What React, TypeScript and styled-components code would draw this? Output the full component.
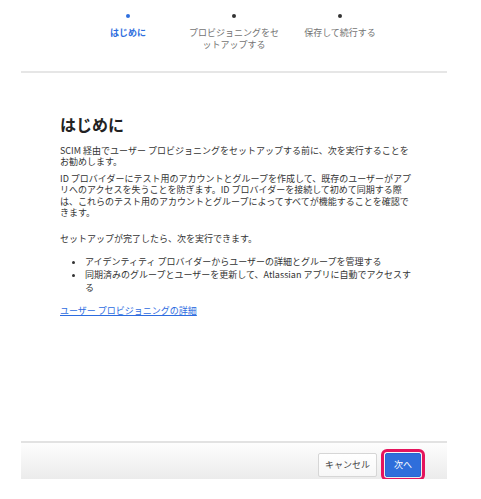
import React from "react";
import styled, { createGlobalStyle } from "styled-components";

const Global = createGlobalStyle`
  html, body { margin: 0; padding: 0; background: #ffffff; }
  body { font-family: "Noto Sans CJK JP", "Noto Sans", sans-serif; color: #333333; }
  * { box-sizing: border-box; }
`;

const Shell = styled.div`
  margin-left: 21px;
  width: 426px;
  height: 479px;
  display: flex;
  flex-direction: column;
`;

const Stepper = styled.ol`
  list-style: none;
  margin: 0;
  padding: 14px 0 0;
  height: 71px;
  display: grid;
  grid-template-columns: repeat(3, 106px);
  justify-content: center;
`;

const Step = styled.li<{ $active?: boolean }>`
  display: flex;
  flex-direction: column;
  align-items: center;
  padding: 0 7px;
  font-size: 9px;
  line-height: 12px;
  text-align: center;
  color: ${(p) => (p.$active ? "#2f6fde" : "#737373")};
  font-weight: ${(p) => (p.$active ? 700 : 400)};
`;

const Dot = styled.span<{ $active?: boolean }>`
  width: 4px;
  height: 4px;
  border-radius: 50%;
  background: ${(p) => (p.$active ? "#2f6fde" : "#333333")};
  margin-bottom: 9px;
`;

const Divider = styled.hr`
  margin: 0;
  border: 0;
  height: 2px;
  background: #e6e6e6;
`;

const Content = styled.section`
  padding: 41px 31px 0 39px;
`;

const Title = styled.h1`
  margin: 0 0 11px;
  font-size: 16px;
  line-height: 20px;
  font-weight: 700;
  color: #222222;
`;

const Para = styled.p<{ $gap?: number }>`
  margin: 0 0 ${(p) => p.$gap ?? 0}px;
  font-size: 9px;
  line-height: 11.4px;
  color: #333333;
`;

const List = styled.ul`
  margin: 10px 0 0;
  padding: 0 1px 0 25px;
  font-size: 9px;
  line-height: 13.3px;
  color: #333333;
`;

const Item = styled.li`
  padding-left: 0;
`;

const Link = styled.a`
  display: inline-block;
  margin-top: 9px;
  font-size: 9px;
  line-height: 11.4px;
  color: #2d6cdf;
  text-decoration: underline;
`;

const Footer = styled.footer`
  margin-top: auto;
  height: 38px;
  border-top: 2px solid #e2e2e2;
  background: linear-gradient(#fdfdfd, #ebebeb);
  display: flex;
  justify-content: flex-end;
  align-items: flex-start;
  gap: 8px;
  padding: 10px 26px 0 0;
`;

const Button = styled.button<{ $primary?: boolean }>`
  height: 24px;
  padding: 0 ${(p) => (p.$primary ? 8 : 6)}px;
  font-family: inherit;
  font-size: 9px;
  line-height: 22px;
  border-radius: 2px;
  cursor: pointer;
  border: 1px solid ${(p) => (p.$primary ? "#2a66d0" : "#d6d6d6")};
  background: ${(p) => (p.$primary ? "#2f6edb" : "linear-gradient(#ffffff, #f7f7f7)")};
  color: ${(p) => (p.$primary ? "#ffffff" : "#444444")};
  outline: ${(p) => (p.$primary ? "3px solid #e5145c" : "none")};
  outline-offset: 1px;
`;

const steps = [
  { label: "はじめに", active: true },
  { label: "プロビジョニングをセットアップする" },
  { label: "保存して続行する" },
];

export default function App() {
  return (
    <>
      <Global />
      <Shell>
        <Stepper>
          {steps.map((s) => (
            <Step key={s.label} $active={s.active}>
              <Dot $active={s.active} />
              <span>{s.label}</span>
            </Step>
          ))}
        </Stepper>
        <Divider />
        <Content>
          <Title>はじめに</Title>
          <Para $gap={5}>
            SCIM 経由でユーザー プロビジョニングをセットアップする前に、次を実行することをお勧めします。
          </Para>
          <Para $gap={15}>
            ID プロバイダーにテスト用のアカウントとグループを作成して、既存のユーザーがアプリへのアクセスを失うことを防ぎます。ID プロバイダーを接続して初めて同期する際は、これらのテスト用のアカウントとグループによってすべてが機能することを確認できます。
          </Para>
          <Para>セットアップが完了したら、次を実行できます。</Para>
          <List>
            <Item>アイデンティティ プロバイダーからユーザーの詳細とグループを管理する</Item>
            <Item>同期済みのグループとユーザーを更新して、Atlassian アプリに自動でアクセスする</Item>
          </List>
          <Link href="#">ユーザー プロビジョニングの詳細</Link>
        </Content>
        <Footer>
          <Button>キャンセル</Button>
          <Button $primary>次へ</Button>
        </Footer>
      </Shell>
    </>
  );
}
